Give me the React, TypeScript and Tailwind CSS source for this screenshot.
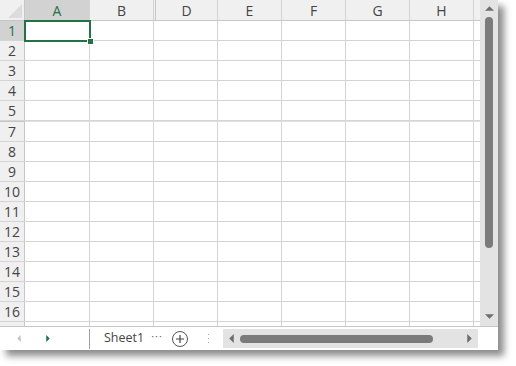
const cols = [
  { key: 'A', w: 'w-[65px]', active: true },
  { key: 'B', w: 'w-[64px]' },
  { key: 'C', w: 'w-[2px]', hidden: true },
  { key: 'D', w: 'w-[62px]' },
  { key: 'E', w: 'w-[64px]' },
  { key: 'F', w: 'w-[64px]' },
  { key: 'G', w: 'w-[64px]' },
  { key: 'H', w: 'w-[64px]' },
];

const rows = [1, 2, 3, 4, 5, 0, 7, 8, 9, 10, 11, 12, 13, 14, 15, 16];

function Tri({ dir, className }: { dir: 'up' | 'down' | 'left' | 'right'; className: string }) {
  const pts = {
    up: '0,5 5,0 10,5',
    down: '0,0 10,0 5,5',
    left: '5,0 5,10 0,5',
    right: '0,0 5,5 0,10',
  }[dir];
  const vb = dir === 'up' || dir === 'down' ? '0 0 10 5' : '0 0 5 10';
  return (
    <svg viewBox={vb} className={className}>
      <polygon points={pts} fill="currentColor" />
    </svg>
  );
}

function HeaderRow() {
  return (
    <div className="flex h-[21px] shrink-0 border-b border-[#c6c6c6] bg-[#f0f0f0]">
      <div className="relative w-[25px] shrink-0 border-r border-[#c6c6c6]">
        <svg viewBox="0 0 14 14" className="absolute right-[2px] bottom-[2px] w-[14px] h-[14px]">
          <polygon points="14,0 14,14 0,14" fill="#dcdcdc" />
        </svg>
      </div>
      {cols.map((c) =>
        c.hidden ? (
          <div key={c.key} className="w-[2px] shrink-0 border-r border-[#c6c6c6]" />
        ) : (
          <div
            key={c.key}
            className={`${c.w} shrink-0 flex items-center justify-center border-r border-[#d4d4d4] text-[14px] ${
              c.active ? 'bg-[#d2d2d2] text-[#217346]' : 'text-[#444]'
            }`}
          >
            {c.key}
          </div>
        )
      )}
      <div className="flex-1" />
    </div>
  );
}

function Row({ n }: { n: number }) {
  if (n === 0) {
    return (
      <div className="flex h-[1px] shrink-0">
        <div className="w-[25px] shrink-0 bg-[#c6c6c6]" />
        <div className="flex-1 bg-[#e2e2e2]" />
      </div>
    );
  }
  return (
    <div className="flex h-[20px] shrink-0 border-b border-[#d4d4d4]">
      <div
        className={`w-[25px] shrink-0 flex items-center justify-center border-r border-[#c6c6c6] text-[14px] ${
          n === 1 ? 'bg-[#d2d2d2] text-[#217346]' : 'bg-[#f0f0f0] text-[#444]'
        }`}
      >
        {n}
      </div>
      {cols.map((c) =>
        c.hidden ? (
          <div key={c.key} className="w-[2px] shrink-0" />
        ) : (
          <div key={c.key} className={`${c.w} shrink-0 border-r border-[#d4d4d4]`} />
        )
      )}
      <div className="flex-1" />
    </div>
  );
}

export default function App() {
  return (
    <div className="w-[516px] h-[366px] bg-white" style={{ fontFamily: '"Open Sans", "Noto Sans", sans-serif' }}>
      <div className="w-[498px] h-[350px] bg-white flex flex-col shadow-[6px_6px_7px_rgba(0,0,0,0.45)] overflow-hidden">
        <div className="flex h-[327px] border-b border-[#c6c6c6]">
          <div className="relative flex-1 flex flex-col overflow-hidden">
            <HeaderRow />
            {rows.map((n) => (
              <Row key={n} n={n} />
            ))}
            <div className="flex flex-1">
              <div className="w-[25px] shrink-0 bg-[#f0f0f0] border-r border-[#c6c6c6]" />
              {cols.map((c) => (
                <div key={c.key} className={`${c.w} shrink-0 ${c.hidden ? '' : 'border-r border-[#d4d4d4]'}`} />
              ))}
            </div>
            {/* selection */}
            <div className="absolute left-[24px] top-[20px] w-[67px] h-[22px] border-2 border-[#217346]" />
            <div className="absolute left-[87px] top-[38px] w-[5px] h-[5px] bg-[#217346] border border-white box-content" />
          </div>
          <div className="w-[18px] shrink-0 bg-[#e3e3e3] flex flex-col items-center">
            <Tri dir="up" className="w-[9px] h-[5px] mt-[6px] text-[#6e6e6e]" />
            <div className="w-[8px] h-[231px] mt-[6px] rounded-full bg-[#7b7b7b]" />
            <div className="flex-1" />
            <Tri dir="down" className="w-[9px] h-[5px] mb-[7px] text-[#6e6e6e]" />
          </div>
        </div>
        <div className="flex flex-1 items-center text-[#444]">
          <div className="w-[89px] h-full flex items-center">
            <Tri dir="left" className="w-[4px] h-[7px] ml-[17px] text-[#c4c4c4]" />
            <Tri dir="right" className="w-[4px] h-[7px] ml-[25px] text-[#217346]" />
          </div>
          <div className="w-px h-[20px] bg-[#a0a0a0]" />
          <div className="text-[12.5px] ml-[14px] text-[#444]">Sheet1</div>
          <div className="ml-[7px] text-[11px] tracking-[1px] text-[#666] -mt-[4px]">···</div>
          <div className="ml-[9px] w-[16px] h-[16px] rounded-full border border-[#555] flex items-center justify-center">
            <svg viewBox="0 0 10 10" className="w-[10px] h-[10px]">
              <path d="M5 1v8M1 5h8" stroke="#444" strokeWidth="1.2" />
            </svg>
          </div>
          <div className="ml-[20px] flex flex-col gap-[3px]">
            <div className="w-px h-px bg-[#aaa]" />
            <div className="w-px h-px bg-[#aaa]" />
            <div className="w-px h-px bg-[#aaa]" />
          </div>
          <div className="ml-[14px] w-[255px] h-[19px] bg-[#e3e3e3] flex items-center">
            <Tri dir="left" className="w-[5px] h-[9px] ml-[6px] text-[#6e6e6e]" />
            <div className="ml-[6px] w-[193px] h-[8px] rounded-full bg-[#7b7b7b]" />
            <div className="flex-1" />
            <Tri dir="right" className="w-[5px] h-[9px] mr-[6px] text-[#6e6e6e]" />
          </div>
        </div>
      </div>
    </div>
  );
}
